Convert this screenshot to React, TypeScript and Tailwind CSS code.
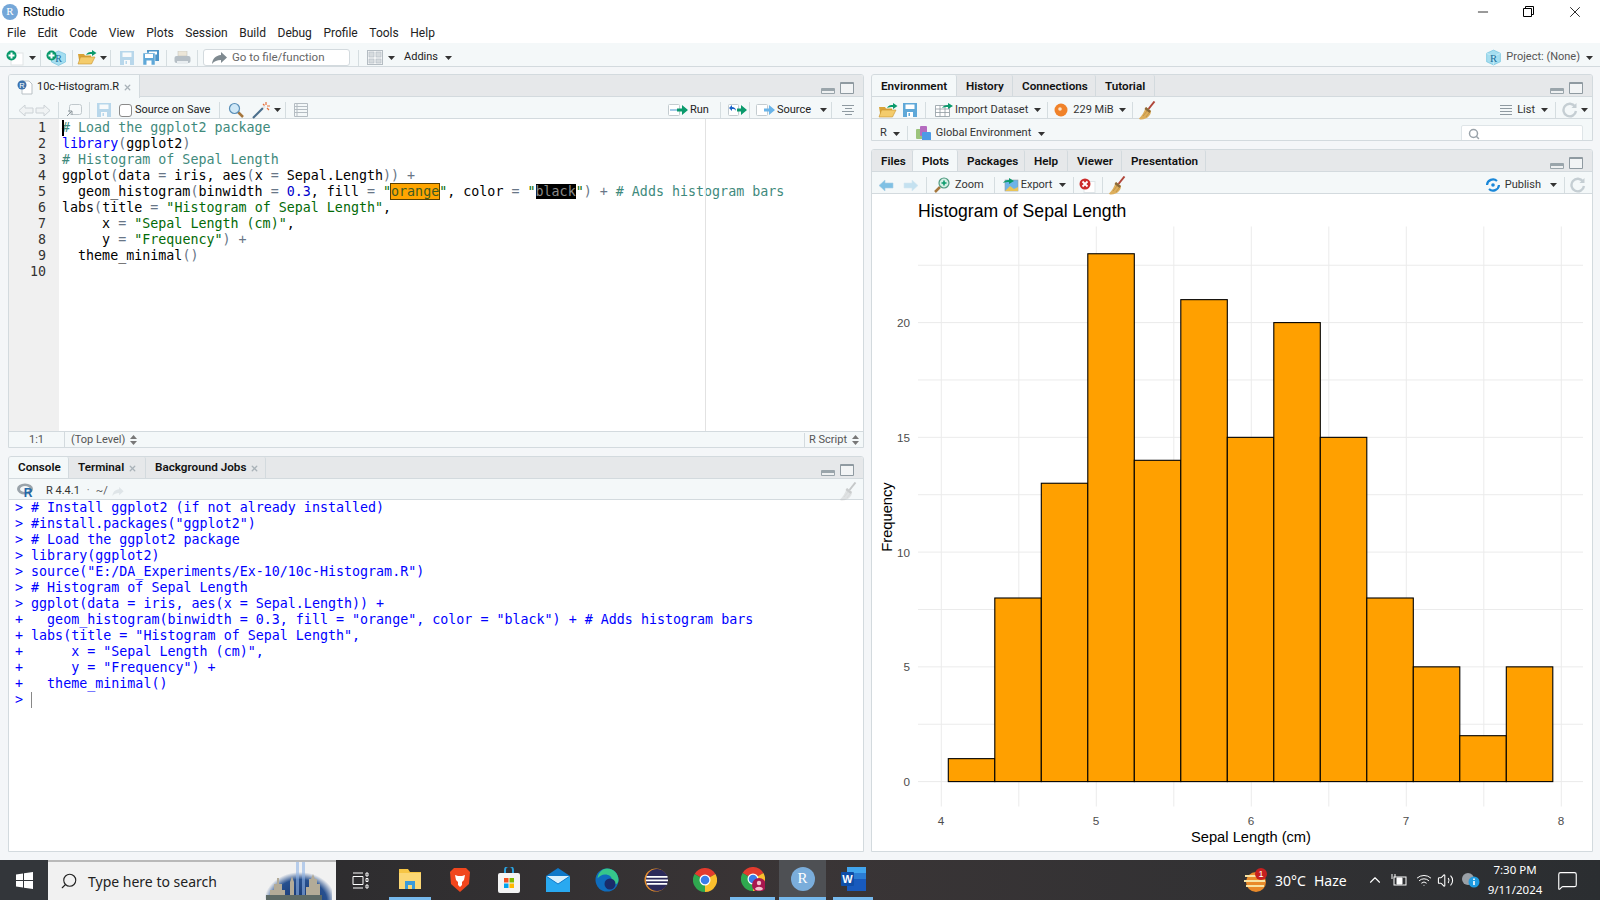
import React from 'react';
import { Search, X, Minus, ChevronUp, Volume2, Wifi, MessageSquare } from 'lucide-react';

const bars = [1, 8, 13, 23, 14, 21, 15, 20, 15, 8, 5, 2, 5];

const Sep = ({ className = 'mx-[7px]' }: { className?: string }) => (
  <div className={`w-px h-[16px] bg-[#d5dde0] shrink-0 ${className}`} />
);

const Caret = ({ className = '' }: { className?: string }) => (
  <svg width="7" height="4" viewBox="0 0 7 4" className={`shrink-0 ${className}`}>
    <path d="M0 0h7L3.5 4z" fill="#333" />
  </svg>
);

const UpDown = ({ className = '' }: { className?: string }) => (
  <svg width="7" height="10" viewBox="0 0 7 10" className={`shrink-0 ${className}`}>
    <path d="M0 4L3.500 0 7 4zM0 6h7l-3.500 4z" fill="#777" />
  </svg>
);

const GreenPlus = ({ x = 0, y = 0 }: { x?: number; y?: number }) => (
  <g transform={`translate(${x} ${y})`}>
    <circle cx="5.5" cy="5.5" r="5" fill="#0a9a6c" />
    <path d="M5.5 2.5v6M2.5 5.5h6" stroke="#fff" strokeWidth="2" />
  </g>
);

const NewDoc = () => (
  <svg width="18" height="16" viewBox="0 0 18 16" className="shrink-0">
    <rect x="5" y="3" width="12" height="12" fill="#fff" stroke="#e0e4e6" />
    <GreenPlus />
  </svg>
);

const Cube = ({ size = 16 }: { size?: number }) => (
  <svg width={size} height={size} viewBox="0 0 16 16" className="shrink-0">
    <path d="M8 1l6.5 3v8L8 15l-6.5-3V4z" fill="#a5def0" stroke="#6cc0dc" strokeWidth=".6" />
    <path d="M1.5 4L8 7l6.5-3M8 7v8" fill="none" stroke="#d6f1f9" strokeWidth=".6" />
    <text x="8" y="12" fontSize="10" textAnchor="middle" fill="#1b6f9c" fontFamily="Liberation Serif, serif">R</text>
  </svg>
);

const NewProject = () => (
  <svg width="20" height="16" viewBox="0 0 20 16" className="shrink-0">
    <g transform="translate(5 0)">
      <path d="M7.5 1l7 3v8l-7 3.500-7-3.500V4z" fill="#a5def0" stroke="#6cc0dc" strokeWidth=".6" />
      <text x="7.500" y="12" fontSize="10" textAnchor="middle" fill="#1b6f9c" fontFamily="Liberation Serif, serif">R</text>
    </g>
    <GreenPlus />
  </svg>
);

const OpenFolder = () => (
  <svg width="21" height="15" viewBox="0 0 21 15" className="shrink-0">
    <path d="M1 4h6l1 1.500h6V13H2.500z" fill="#d9a336" />
    <path d="M3.500 7H18l-3.500 7H1z" fill="#f4cc6c" stroke="#c8922c" strokeWidth=".6" />
    <path d="M9 5c1-2.500 3.500-3 6-3V0l4.500 3L15 6V4c-2 0-4 0-6 1z" fill="#0a9a6c" />
  </svg>
);

const Save = ({ faded = false }: { faded?: boolean }) => (
  <svg width="14" height="14" viewBox="0 0 14 14" className={`shrink-0 ${faded ? 'opacity-40' : ''}`}>
    <path d="M0 0h14v14H0z" fill="#5fa8d8" />
    <path d="M2.500 1.500h9v4.500h-9z" fill="#fff" />
    <path d="M4 9h6v5H4z" fill="#fff" />
    <path d="M5.500 10h1.500v3H5.500z" fill="#5fa8d8" />
  </svg>
);

const SaveAll = () => (
  <svg width="16" height="15" viewBox="0 0 16 15" className="shrink-0">
    <path d="M4 0h12v11H4z" fill="#4b94c8" />
    <path d="M6 1.500h8v3H6z" fill="#fff" />
    <path d="M0 3h12v12H0z" fill="#5fa8d8" stroke="#f4f8f9" strokeWidth=".5" />
    <path d="M2 4h8v4H2zM3.500 10.500h5V15h-5z" fill="#fff" />
  </svg>
);

const Printer = () => (
  <svg width="17" height="14" viewBox="0 0 17 14" className="shrink-0">
    <path d="M4 0h9v5H4z" fill="#ece6d8" stroke="#c8c8c0" strokeWidth=".6" />
    <rect x="0.500" y="5" width="16" height="7" rx="2" fill="#b6bfc6" />
    <path d="M3 10h11v3H3z" fill="#e8edf0" />
  </svg>
);

const Layout = () => (
  <svg width="16" height="15" viewBox="0 0 16 15" className="shrink-0">
    <rect x=".5" y=".5" width="15" height="14" fill="#f2f4f5" stroke="#b4bcc2" />
    <path d="M2 2h5v5H2zM9 2h5v5H9zM2 9h5v4H2zM9 9h5v4H9z" fill="#d6dbde" stroke="#b4bcc2" strokeWidth=".6" />
  </svg>
);

const Broom = ({ gray = false }: { gray?: boolean }) => (
  <svg width="18" height="19" viewBox="0 0 18 19" className={`shrink-0 ${gray ? 'opacity-30 grayscale' : ''}`}>
    <path d="M16.500 0.500L10.500 8" stroke="#b0463a" strokeWidth="2" />
    <path d="M8 6l5 4c0 4-3 8-10 8.500-1 0-2-.5-2-1C4 15 6 11 8 6z" fill="#dcae5c" />
    <path d="M8 6l5 4-1.500 2-5-4z" fill="#8a6a3a" />
    <path d="M5 15l4-5M8 16l3-4" stroke="#b98a3e" strokeWidth=".7" />
  </svg>
);

const PaneButtons = () => (
  <div className="ml-auto self-end flex items-end gap-[5px] mr-[9px] mb-[2px] shrink-0">
    <div className="w-[14px] h-[6px] rounded-[1px] border border-[#9aa5ab] border-t-[3px] bg-[#eef0f1]" />
    <div className="w-[14px] h-[12px] rounded-[1px] border border-[#8f9aa1] border-t-[2px] bg-[#f2f4f5]" />
  </div>
);

const Tab = ({ label, active, width, closable, low }: { label: string; active?: boolean; width: string; closable?: boolean; low?: boolean }) => (
  <div
    className={`${width} shrink-0 h-full flex items-center pl-[9px] ${low ? 'pt-[3px]' : 'pt-[1px]'} border-r border-[#d3dade] font-semibold text-[11.700px] text-[#111] rounded-t-[2px] ${
      active ? 'bg-[#f4f8f9] -mb-px h-[23px] z-10' : ''
    }`}
  >
    <span>{label}</span>
    {closable && <X size={9} strokeWidth={3.5} className="ml-[4px] text-[#a9b2b8]" />}
  </div>
);

const TabBar = ({ children }: { children: React.ReactNode }) => (
  <div className="flex items-start h-[22px] bg-[#e6e8ea] border-b border-[#d3dade] shrink-0">{children}</div>
);

const ToolRow = ({ children, className = 'h-[22px] pt-[5px]' }: { children: React.ReactNode; className?: string }) => (
  <div className={`flex items-center bg-[#f4f8f9] border-b border-[#d3dade] text-[11px] text-[#333] shrink-0 ${className}`}>{children}</div>
);

const LeftArrow = ({ opacity = 'opacity-100', flip = false }: { opacity?: string; flip?: boolean }) => (
  <svg width="16" height="13" viewBox="0 0 16 13" className={`shrink-0 ${opacity} ${flip ? '-scale-x-100' : ''}`}>
    <path d="M1 6.500L7 1v3h8v5H7v3z" fill="#7fc0e4" stroke="#a8cfe4" strokeWidth=".6" />
  </svg>
);

const GrayArrow = ({ flip = false }: { flip?: boolean }) => (
  <svg width="16" height="13" viewBox="0 0 16 13" className={`shrink-0 ${flip ? '-scale-x-100' : ''}`}>
    <path d="M1 6.500L7 1v3h8v5H7v3z" fill="#f0f3f4" stroke="#ccd2d6" />
  </svg>
);

const Refresh = () => (
  <svg width="16" height="16" viewBox="0 0 16 16" className="shrink-0">
    <path d="M13 4.500A6.300 6.300 0 1 0 14 9" fill="none" stroke="#c5ced3" strokeWidth="2.400" />
    <path d="M14.500 1v5h-5z" fill="#c5ced3" />
  </svg>
);

const EditorCode = () => {
  const cm = 'text-[#3f8a7c]';
  const op = 'text-[#687687]';
  const st = 'text-[#036a07]';
  return (
    <pre className="font-['DejaVu_Sans_Mono',monospace] text-[13.33px] leading-[16px] text-black pl-[3px] pt-[1px]">
      <div className={cm}># Load the ggplot2 package</div>
      <div><span className="text-[#0000ff]">library</span><span className={op}>(</span>ggplot2<span className={op}>)</span></div>
      <div className={cm}># Histogram of Sepal Length</div>
      <div>ggplot<span className={op}>(</span>data <span className={op}>=</span> iris, aes<span className={op}>(</span>x <span className={op}>=</span> Sepal.Length<span className={op}>)) +</span></div>
      <div>
        {'  geom_histogram'}<span className={op}>(</span>binwidth <span className={op}>=</span> <span className="text-[#0000cd]">0.3</span>, fill <span className={op}>=</span> <span className={st}>"</span>
        <span className="bg-[#ffa500] outline outline-1 outline-[#5a4000] text-[#3c5a20]">orange</span>
        <span className={st}>"</span>, color <span className={op}>=</span> <span className={st}>"</span>
        <span className="bg-black text-[#8a8a8a]">black</span>
        <span className={st}>"</span><span className={op}>) +</span> <span className={cm}># Adds histogram bars</span>
      </div>
      <div>labs<span className={op}>(</span>title <span className={op}>=</span> <span className={st}>"Histogram of Sepal Length"</span>,</div>
      <div>{'     x '}<span className={op}>=</span> <span className={st}>"Sepal Length (cm)"</span>,</div>
      <div>{'     y '}<span className={op}>=</span> <span className={st}>"Frequency"</span><span className={op}>) +</span></div>
      <div>{'  theme_minimal'}<span className={op}>()</span></div>
    </pre>
  );
};

const consoleLines = [
  '> # Install ggplot2 (if not already installed)',
  '> #install.packages("ggplot2")',
  '> # Load the ggplot2 package',
  '> library(ggplot2)',
  '> source("E:/DA_Experiments/Ex-10/10c-Histogram.R")',
  '> # Histogram of Sepal Length',
  '> ggplot(data = iris, aes(x = Sepal.Length)) +',
  '+   geom_histogram(binwidth = 0.3, fill = "orange", color = "black") + # Adds histogram bars',
  '+ labs(title = "Histogram of Sepal Length",',
  '+      x = "Sepal Length (cm)",',
  '+      y = "Frequency") +',
  '+   theme_minimal()',
  '> ',
];

const Chart = () => {
  const y0 = 781.6;
  const ux = 22.95;
  const x0 = 948.3;
  const bw = 46.5;
  const majorY = [0, 5, 10, 15, 20];
  const minorY = [2.5, 7.5, 12.5, 17.5, 22.5];
  const gridX = [4, 4.5, 5, 5.5, 6, 6.5, 7, 7.5, 8];
  return (
    <svg viewBox="872 194 720 657" className="w-full h-full block font-['Liberation_Sans',sans-serif]">
      {[...majorY, ...minorY].map((v) => (
        <line key={v} x1="918" x2="1583" y1={y0 - v * ux} y2={y0 - v * ux} stroke="#ebebeb" strokeWidth="1" />
      ))}
      {gridX.map((v) => (
        <line key={v} x1={941.3 + (v - 4) * 155} x2={941.3 + (v - 4) * 155} y1="226.5" y2="806.5" stroke="#ebebeb" strokeWidth="1" />
      ))}
      {bars.map((b, i) => (
        <rect key={i} x={x0 + i * bw} y={y0 - b * ux} width={bw} height={b * ux} fill="#ffa000" stroke="#000" strokeWidth="1.100" />
      ))}
      <text x="918" y="217" fontSize="17.600" fill="#000">Histogram of Sepal Length</text>
      {majorY.map((v) => (
        <text key={v} x="910" y={y0 + 4.500} fontSize="11.700" textAnchor="end" fill="#4d4d4d" transform={`translate(0 ${-v * ux})`}>{v}</text>
      ))}
      {[4, 5, 6, 7, 8].map((v) => (
        <text key={v} x={941 + (v - 4) * 155} y="825" fontSize="11.700" textAnchor="middle" fill="#4d4d4d">{v}</text>
      ))}
      <text x="1251" y="842" fontSize="14.700" textAnchor="middle" fill="#000">Sepal Length (cm)</text>
      <text transform="translate(892 517) rotate(-90)" fontSize="14.700" textAnchor="middle" fill="#000">Frequency</text>
    </svg>
  );
};

const Chrome = ({ profile = false }: { profile?: boolean }) => (
  <svg width="24" height="24" viewBox="0 0 24 24" className="shrink-0">
    <path d="M12 12L1.600 6A12 12 0 0 1 22.400 6z" fill="#e33b2e" />
    <path d="M12 12L22.400 6A12 12 0 0 1 12 24z" fill="#fbc02d" />
    <path d="M12 12L12 24A12 12 0 0 1 1.600 6z" fill="#2fa84f" />
    <circle cx="12" cy="12" r="5.500" fill="#fff" />
    <circle cx="12" cy="12" r="4.300" fill="#3b7dea" />
    {profile && (
      <>
        <circle cx="18" cy="18" r="7" fill="#a8164f" />
        <circle cx="18" cy="16" r="2.200" fill="#f4c2cf" />
        <path d="M14 22c1-3 7-3 8 0-2 2-6 2-8 0z" fill="#f4c2cf" />
      </>
    )}
  </svg>
);

const Taskbar = () => (
  <div className="h-[40px] flex items-center bg-gradient-to-r from-[#25272a] via-[#3a3536] to-[#2b2e31] shrink-0 font-['Noto_Sans',sans-serif]">
    <div className="w-[48px] h-full flex items-center justify-center bg-[#33363a]">
      <svg width="17" height="17" viewBox="0 0 17 17">
        <path d="M0 2.400l7-1v6.600H0zM8 1.300L17 0v8H8zM0 9h7v6.600l-7-1zM8 9h9v8l-9-1.300z" fill="#fff" />
      </svg>
    </div>
    <div className="w-[288px] h-full flex items-center bg-[#f1f1f1] border-t-2 border-[#b9b9b9] relative overflow-hidden">
      <Search size={18} strokeWidth={1.500} className="ml-[12px] text-[#222] -scale-x-100" />
      <span className="ml-[10px] text-[14px] text-[#222]">Type here to search</span>
      <svg width="76" height="40" viewBox="0 0 76 40" className="absolute right-[4px] top-[-2px]">
        <defs>
          <radialGradient id="skyline" cx="50%" cy="70%" r="50%">
            <stop offset="0%" stopColor="#16356e" />
            <stop offset="75%" stopColor="#27508f" />
            <stop offset="100%" stopColor="#f1f1f1" />
          </radialGradient>
        </defs>
        <ellipse cx="44" cy="30" rx="36" ry="30" fill="url(#skyline)" />
        <path d="M40 0h3v40h-3zM46 0h3v40h-3z" fill="#8fb4e6" opacity=".6" />
        <path d="M14 40V30h4v-6h3v-6h2v6h3v6h3v10zM34 40V22l2-6 2 6v18zM50 40V27h3v-8h2l2-5 2 5h2v5h3v16z" fill="#b3ab98" />
        <path d="M10 40V35h56v5z" fill="#5d6a66" />
      </svg>
    </div>
    <div className="w-[48px] flex justify-center">
      <svg width="17" height="17" viewBox="0 0 17 17" fill="none" stroke="#fff">
        <path d="M1 1h10M1 16h10M1 4.500h10v8H1zM14 1h2v3h-2zM14 6.500h2v3h-2zM14 13h2v3h-2z" />
      </svg>
    </div>
    <div className="w-[42px] ml-[5px] mr-[4px] h-full flex items-center justify-center border-b-[3px] border-[#76b9ed] relative">
      <svg width="24" height="22" viewBox="0 0 24 22">
        <path d="M1 1h9l2 3h11v17H1z" fill="#f6c544" />
        <path d="M1 5h22v16H1z" fill="#fbd774" />
        <path d="M7 13h10v8h-3v-4h-4v4H7z" fill="#3a9ad9" />
      </svg>
    </div>
    <div className="w-[49px] flex justify-center">
      <svg width="22" height="26" viewBox="0 0 22 26">
        <path d="M5 1h12l4 4-1 12-9 8-9-8L1 5z" fill="#f1461d" />
        <path d="M6 8l3 1h4l3-1-1 5-2 2v3l-2 2-2-2v-3l-2-2z" fill="#fff" />
      </svg>
    </div>
    <div className="w-[49px] flex justify-center">
      <svg width="24" height="26" viewBox="0 0 24 26">
        <path d="M8 8V3a4 4 0 0 1 8 0v5" fill="none" stroke="#2aa0dc" strokeWidth="2" />
        <rect x="1" y="6" width="22" height="20" rx="2" fill="#f4f4f4" />
        <path d="M7 11h4.500v4.500H7z" fill="#f25022" />
        <path d="M12.500 11H17v4.500h-4.500z" fill="#7fba00" />
        <path d="M7 16.500h4.500V21H7z" fill="#00a4ef" />
        <path d="M12.500 16.500H17V21h-4.500z" fill="#ffb900" />
      </svg>
    </div>
    <div className="w-[49px] flex justify-center">
      <svg width="24" height="24" viewBox="0 0 24 24">
        <path d="M12 0l12 8v16H0V8z" fill="#0f78c8" />
        <path d="M0 8h24v16H0z" fill="#29a9f0" />
        <path d="M0 8l12 8 12-8" fill="#d9f0fc" />
        <path d="M0 8l12 8 12-8" fill="none" stroke="#0f78c8" strokeWidth="1" />
      </svg>
    </div>
    <div className="w-[49px] flex justify-center">
      <svg width="24" height="26" viewBox="0 0 24 26">
        <circle cx="12" cy="13" r="11.500" fill="#0f6cbd" />
        <path d="M12 1.500C19 1.500 23.500 7 23.500 13c0 3-2 4.500-5 4.500H12c3 0 5-2 5-4 0-4-3-6-7-6-3 0-6 2-7.500 4C3 6 7 1.500 12 1.500z" fill="#36c78b" />
        <circle cx="15" cy="17" r="5.500" fill="#1a2c6a" />
      </svg>
    </div>
    <div className="w-[49px] flex justify-center">
      <svg width="24" height="26" viewBox="0 0 24 26">
        <circle cx="12" cy="13" r="11.500" fill="#e8902c" />
        <circle cx="13" cy="13" r="11" fill="#2c2a5a" />
        <path d="M2.500 9h21v1.800h-21zM2 12.500h22v1.800H2zM2.800 16h20.400v1.800H2.800z" fill="#fff" />
      </svg>
    </div>
    <div className="w-[49px] flex justify-center"><Chrome /></div>
    <div className="w-[45px] ml-[1px] mr-[3px] h-full flex items-center justify-center border-b-[3px] border-[#76b9ed]"><Chrome profile /></div>
    <div className="w-[47px] ml-[1px] h-full flex items-center justify-center bg-[#4e5054] border-b-[3px] border-[#76b9ed]">
      <div className="w-[24px] h-[24px] rounded-full bg-[#7aaddb] flex items-center justify-center text-white text-[15px] font-['Liberation_Serif',serif]">R</div>
    </div>
    <div className="w-[40px] ml-[7px] h-full flex items-center justify-center border-b-[3px] border-[#76b9ed]">
      <svg width="25" height="24" viewBox="0 0 25 24">
        <path d="M6 0h19v24H6z" fill="#185abd" />
        <path d="M6 0h19v6H6z" fill="#41a5ee" />
        <path d="M6 6h19v6H6z" fill="#2b7cd3" />
        <rect x="0" y="5" width="13" height="14" rx="1" fill="#0f4ea8" />
        <text x="6.500" y="16" fontSize="11" fontWeight="700" textAnchor="middle" fill="#fff" fontFamily="Liberation Sans, sans-serif">W</text>
      </svg>
    </div>
    <div className="ml-auto flex items-center h-full text-white">
      <svg width="26" height="26" viewBox="0 0 26 26" className="mr-[6px]">
        <circle cx="13" cy="15" r="10" fill="#e98a2a" />
        <path d="M2 9h16M1 14h21M3 19h18" stroke="#f7e3a3" strokeWidth="2" />
        <circle cx="18" cy="7" r="6" fill="#c62020" />
        <text x="18" y="10" fontSize="9" textAnchor="middle" fill="#fff" fontFamily="Liberation Sans, sans-serif">1</text>
      </svg>
      <span className="text-[14px] w-[39px]">30°C</span>
      <span className="text-[14px] w-[52px]">Haze</span>
      <ChevronUp size={18} strokeWidth={1.500} className="mr-[7px]" />
      <svg width="16" height="13" viewBox="0 0 16 13" fill="none" stroke="#fff" className="mr-[9px]">
        <rect x="3" y="3" width="12" height="8" />
        <path d="M6 4h5v6H6z" fill="#fff" />
        <path d="M1 0v5M4 0v3" />
      </svg>
      <Wifi size={16} strokeWidth={1.500} className="mr-[5px]" />
      <Volume2 size={17} strokeWidth={1.500} className="mr-[8px]" />
      <svg width="18" height="16" viewBox="0 0 18 16" className="mr-[6px]">
        <circle cx="6" cy="7" r="6" fill="#9aa0a6" />
        <circle cx="12" cy="10" r="5.500" fill="#1f9be0" />
        <path d="M11.200 9h1.600v4h-1.600zM11.200 6.500h1.600V8h-1.600z" fill="#fff" />
      </svg>
      <div className="w-[58px] text-center text-[11.500px] leading-[20px]">
        <div>7:30 PM</div>
        <div>9/11/2024</div>
      </div>
      <MessageSquare size={21} strokeWidth={1.300} className="ml-[13px] mr-[22px]" />
    </div>
  </div>
);

export default function App() {
  return (
    <div className="w-[1600px] h-[900px] flex flex-col overflow-hidden bg-white font-['Roboto',sans-serif] text-[12px] text-[#333]">
      {/* window title */}
      <div className="h-[22px] pt-[1px] flex items-center bg-white shrink-0">
        <div className="ml-[2px] w-[16px] h-[16px] rounded-full bg-[#75a7d8] text-white text-[11px] flex items-center justify-center font-['Liberation_Serif',serif]">R</div>
        <span className="ml-[5px] text-[12px] text-black">RStudio</span>
        <Minus size={16} strokeWidth={1.200} className="ml-auto mr-[32px] text-black" />
        <svg width="11" height="11" viewBox="0 0 11 11" fill="none" stroke="#000" className="mr-[32px]">
          <path d="M.5 2.500h8v8h-8zM2.500 2.500v-2h8v8h-2" />
        </svg>
        <X size={18} strokeWidth={1.100} className="mr-[16px] text-black" />
      </div>

      {/* menu */}
      <div className="h-[21px] pt-[1px] flex items-center gap-[11.600px] pl-[7px] bg-white shrink-0 text-[12px] text-[#222]">
        {['File', 'Edit', 'Code', 'View', 'Plots', 'Session', 'Build', 'Debug', 'Profile', 'Tools', 'Help'].map((m) => (
          <span key={m}>{m}</span>
        ))}
      </div>

      {/* main toolbar */}
      <div className="h-[24px] pt-[6px] flex items-center bg-[#f4f8f9] border-b border-[#d3dade] shrink-0 pl-[6px] text-[11px] text-[#333]">
        <NewDoc />
        <Caret className="ml-[5px]" />
        <Sep className="ml-[4px] mr-[5px]" />
        <NewProject />
        <Sep className="ml-[6px] mr-[4px]" />
        <OpenFolder />
        <Caret className="ml-[2px]" />
        <Sep className="ml-[3px] mr-[9px]" />
        <Save faded />
        <div className="w-[9px]" />
        <SaveAll />
        <Sep className="ml-[7px] mr-[7px]" />
        <Printer />
        <Sep className="ml-[6px] mr-[5px]" />
        <div className="w-[147px] h-[17px] bg-white border border-[#d3dade] rounded-[3px] flex items-center pl-[8px] text-[#666]">
          <svg width="15" height="12" viewBox="0 0 15 12" className="shrink-0">
            <path d="M9 0l6 5.500L9 11V8C5 8 2.500 9 0 12 .5 7 3.500 3.500 9 3z" fill="#7f8a90" />
          </svg>
          <span className="ml-[5px] text-[11.500px]">Go to file/function</span>
        </div>
        <Sep className="ml-[8px] mr-[8px]" />
        <Layout />
        <Caret className="ml-[5px]" />
        <span className="ml-[9px] text-[#222]">Addins</span>
        <Caret className="ml-[7px]" />
        <div className="ml-auto flex items-center mr-[7px]">
          <Cube size={17} />
          <span className="ml-[4px] text-[#555]">Project: (None)</span>
          <Caret className="ml-[6px]" />
        </div>
      </div>

      {/* panes */}
      <div className="flex-1 min-h-0 flex gap-[7px] pt-[7px] pb-[8px] pl-[8px] pr-[7px] bg-[#f4f6f8]">
        <div className="w-[856px] shrink-0 flex flex-col gap-[8px]">
          {/* source */}
          <div className="h-[374px] shrink-0 flex flex-col border border-[#d3dade] rounded-t-[3px] bg-white overflow-hidden">
            <TabBar>
              <div className="w-[131px] h-[23px] -mb-px z-10 bg-[#f4f8f9] border-r border-[#d3dade] flex items-center pl-[8px] pt-[1px] text-[11px] text-[#222]">
                <svg width="16" height="15" viewBox="0 0 16 15" className="shrink-0">
                  <path d="M5 1h7l3 3v10H5z" fill="#fff" stroke="#b8c0c5" />
                  <circle cx="5" cy="5" r="4.500" fill="#3d72ac" />
                  <text x="5" y="8" fontSize="7.500" fill="#fff" textAnchor="middle" fontFamily="Liberation Sans, sans-serif">R</text>
                </svg>
                <span className="ml-[4px]">10c-Histogram.R</span>
                <X size={9} strokeWidth={3.500} className="ml-[4px] text-[#a9b2b8]" />
              </div>
              <PaneButtons />
            </TabBar>
            <ToolRow>
              <div className="ml-[9px]"><GrayArrow /></div>
              <div className="ml-[1px]"><GrayArrow flip /></div>
              <Sep className="ml-[7px] mr-[7px]" />
              <svg width="16" height="13" viewBox="0 0 16 13" className="shrink-0">
                <rect x="3.500" y=".5" width="12" height="10" rx="2" fill="#f6f9fa" stroke="#c0c8cc" />
                <path d="M1 12l5-5M2 7h4v4" fill="none" stroke="#8d979d" />
              </svg>
              <Sep className="ml-[7px] mr-[7px]" />
              <Save faded />
              <input type="checkbox" readOnly className="appearance-none ml-[8px] w-[13px] h-[13px] bg-white border border-[#8a8a8a] rounded-[3px]" />
              <span className="ml-[3px] text-[#222] whitespace-nowrap">Source on Save</span>
              <Sep className="ml-[9px] mr-[8px]" />
              <svg width="16" height="16" viewBox="0 0 16 16" className="shrink-0">
                <path d="M10 10l5 5" stroke="#a5763c" strokeWidth="2.500" />
                <circle cx="6.500" cy="6.500" r="5" fill="#cfe8f7" stroke="#5a8fb8" strokeWidth="1.200" />
              </svg>
              <svg width="20" height="17" viewBox="0 0 20 17" className="shrink-0 ml-[8px]">
                <path d="M1 16L11 6" stroke="#4c6f8c" strokeWidth="2.200" />
                <path d="M11 6l2-2" stroke="#e6e6e6" strokeWidth="2.200" />
                <path d="M14 0v3M18 4h-3M11 2l1.500 1.500M17 8l-2-2" stroke="#e8703a" strokeWidth="1.200" />
              </svg>
              <Caret className="ml-[2px]" />
              <Sep className="ml-[4px] mr-[8px]" />
              <svg width="14" height="14" viewBox="0 0 14 14" fill="none" stroke="#b4bcc2" className="shrink-0">
                <path d="M.5.5h13v13H.5zM.5 3.500h13M.5 6.500h13M.5 9.500h13M3 .5v13" />
              </svg>
              <div className="ml-auto flex items-center">
                <svg width="20" height="12" viewBox="0 0 20 12" className="shrink-0">
                  <rect x=".5" y=".5" width="11" height="11" rx="1" fill="#fff" stroke="#c4ccd0" />
                  <path d="M2 6h7" stroke="#a5cbe8" strokeWidth="2" />
                  <path d="M9 4.500h5V1l6 5-6 5V7.500H9z" fill="#0a9a6c" />
                </svg>
                <span className="ml-[2px] text-[#222]">Run</span>
                <Sep className="ml-[11px] mr-[7px]" />
                <svg width="19" height="12" viewBox="0 0 19 12" className="shrink-0">
                  <rect x=".5" y=".5" width="10" height="11" rx="1" fill="#fff" stroke="#c4ccd0" />
                  <path d="M1 4l3-3v2c2 0 4 1 4 4-1-2-2-2-4-2v2z" fill="#1a62c8" />
                  <path d="M9 4.500h4V1l6 5-6 5V7.500H9z" fill="#0a9a6c" />
                </svg>
                <Sep className="ml-[2px] mr-[6px]" />
                <svg width="20" height="12" viewBox="0 0 20 12" className="shrink-0">
                  <rect x=".5" y=".5" width="11" height="11" rx="1" fill="#fff" stroke="#c4ccd0" />
                  <path d="M8 4.500h5V1l6 5-6 5V7.500H8z" fill="#6ab4e8" />
                </svg>
                <span className="ml-[1px] text-[#222]">Source</span>
                <Caret className="ml-[9px]" />
                <Sep className="ml-[4px] mr-[10px]" />
                <svg width="12" height="11" viewBox="0 0 12 11" stroke="#8f9aa1" className="shrink-0 mr-[9px]">
                  <path d="M0 .5h12M3 3.500h7M0 6.500h12M3 9.500h7" />
                </svg>
              </div>
            </ToolRow>
            <div className="flex-1 min-h-0 flex relative">
              <div className="w-[50px] shrink-0 bg-[#f0f0f0] text-right pr-[13px] pt-[1px] font-['DejaVu_Sans_Mono',monospace] text-[13.330px] leading-[16px] text-[#333]">
                {[1, 2, 3, 4, 5, 6, 7, 8, 9, 10].map((n) => (
                  <div key={n}>{n}</div>
                ))}
              </div>
              <EditorCode />
              <div className="absolute left-[53px] top-[1px] w-[2px] h-[16px] bg-black" />
              <div className="absolute left-[696px] top-0 bottom-0 w-px bg-[#e2e2e2]" />
            </div>
            <div className="h-[16px] shrink-0 pt-[1px] flex items-center bg-[#f4f8f9] border-t border-[#d3dade] text-[#555] text-[11px]">
              <span className="w-[56px] text-center border-r border-[#d3dade]">1:1</span>
              <span className="ml-[6px]">(Top Level)</span>
              <UpDown className="ml-[5px]" />
              <div className="ml-auto w-px h-full bg-[#d3dade]" />
              <span className="ml-[4px]">R Script</span>
              <UpDown className="ml-[5px] mr-[4px]" />
            </div>
          </div>

          {/* console */}
          <div className="flex-1 min-h-0 flex flex-col border border-[#d3dade] rounded-t-[3px] bg-white overflow-hidden">
            <TabBar>
              <Tab label="Console" active width="w-[60px]" />
              <Tab label="Terminal" width="w-[77px]" closable />
              <Tab label="Background Jobs" width="w-[120px]" closable />
              <PaneButtons />
            </TabBar>
            <ToolRow className="h-[21px] pt-[4px]">
              <svg width="18" height="16" viewBox="0 0 18 16" className="ml-[8px] shrink-0">
                <ellipse cx="8" cy="6" rx="8" ry="5.500" fill="#9aa3aa" />
                <ellipse cx="8" cy="6" rx="5" ry="3" fill="#f4f8f9" />
                <text x="11" y="14" fontSize="12" fontWeight="700" fill="#2267a8" textAnchor="middle" fontFamily="Liberation Sans, sans-serif">R</text>
              </svg>
              <span className="ml-[11px] text-[#333]">R 4.4.1</span>
              <span className="ml-[7px] text-[#777]">·</span>
              <span className="ml-[6px] text-[#555]">~/</span>
              <svg width="12" height="9" viewBox="0 0 15 12" className="ml-[4px] shrink-0">
                <path d="M9 0l6 5.500L9 11V8C5 8 2.500 9 0 12 .5 7 3.500 3.500 9 3z" fill="#dfe5e8" />
              </svg>
              <div className="ml-auto mr-[6px]"><Broom gray /></div>
            </ToolRow>
            <div className="flex-1 min-h-0 relative pl-[6px]">
              <pre className="font-['DejaVu_Sans_Mono',monospace] text-[13.330px] leading-[16px] text-[#0000ff]">
                {consoleLines.map((l, i) => (
                  <div key={i}>{l}</div>
                ))}
              </pre>
              <div className="absolute left-[22px] top-[192px] w-px h-[16px] bg-[#888]" />
            </div>
          </div>
        </div>

        <div className="flex-1 min-w-0 flex flex-col gap-[8px]">
          {/* environment */}
          <div className="h-[67px] shrink-0 flex flex-col border border-[#d3dade] rounded-t-[3px] bg-[#f4f8f9] overflow-hidden">
            <TabBar>
              <Tab label="Environment" low active width="w-[85px]" />
              <Tab label="History" low width="w-[56px]" />
              <Tab label="Connections" low width="w-[83px]" />
              <Tab label="Tutorial" low width="w-[59px]" />
              <PaneButtons />
            </TabBar>
            <ToolRow>
              <div className="ml-[6px]"><OpenFolder /></div>
              <div className="ml-[4px]"><Save /></div>
              <Sep className="ml-[8px] mr-[9px]" />
              <svg width="18" height="14" viewBox="0 0 18 14" className="shrink-0">
                <path d="M.5 2.500h14v11H.5zM.5 6h14M.5 9.500h14M5 2.500v11M10 2.500v11" fill="#fff" stroke="#8f9aa1" strokeWidth=".8" />
                <path d="M7 5c1-2 3-3 6-3V0l5 3-5 3V4c-2 0-4 0-6 1z" fill="#0a9a6c" />
              </svg>
              <span className="ml-[2px]">Import Dataset</span>
              <Caret className="ml-[6px]" />
              <Sep className="ml-[6px] mr-[6px]" />
              <svg width="14" height="14" viewBox="0 0 14 14" className="shrink-0">
                <circle cx="7" cy="7" r="6.500" fill="#f0822a" />
                <circle cx="6" cy="6" r="1.800" fill="#fbe3c8" />
              </svg>
              <span className="ml-[5px]">229 MiB</span>
              <Caret className="ml-[5px]" />
              <Sep className="ml-[6px] mr-[5px]" />
              <Broom />
              <div className="ml-auto flex items-center">
                <svg width="12" height="11" viewBox="0 0 12 11" stroke="#8f9aa1" className="shrink-0">
                  <path d="M0 .5h12M0 3.500h12M0 6.500h12M0 9.500h12" />
                </svg>
                <span className="ml-[5px]">List</span>
                <Caret className="ml-[6px]" />
                <Sep className="ml-[7px] mr-[6px]" />
                <Refresh />
                <Caret className="ml-[3px] mr-[4px]" />
              </div>
            </ToolRow>
            <div className="flex-1 flex items-center pt-[6px] text-[11px] text-[#333]">
              <span className="ml-[8px]">R</span>
              <Caret className="ml-[6px]" />
              <Sep className="ml-[7px] mr-[8px]" />
              <svg width="15" height="15" viewBox="0 0 15 15" className="shrink-0">
                <rect x="0" y="3" width="8" height="10" rx="1" fill="#9cc47c" />
                <rect x="4" y="0" width="7" height="10" rx="1" fill="#b56cc0" />
                <rect x="6" y="6" width="9" height="9" rx="1" fill="#4d9be6" />
              </svg>
              <span className="ml-[5px]">Global Environment</span>
              <Caret className="ml-[7px]" />
              <div className="ml-auto self-end mr-[9px] w-[122px] h-[17px] bg-white border border-[#dfe5e8] rounded-[2px] flex items-center pl-[6px]">
                <Search size={12} strokeWidth={3} className="text-[#9aa3aa]" />
              </div>
            </div>
          </div>

          {/* plots */}
          <div className="flex-1 min-h-0 flex flex-col border border-[#d3dade] rounded-t-[3px] bg-white overflow-hidden">
            <TabBar>
              <Tab label="Files" low width="w-[41px]" />
              <Tab label="Plots" low active width="w-[45px]" />
              <Tab label="Packages" low width="w-[67px]" />
              <Tab label="Help" low width="w-[43px]" />
              <Tab label="Viewer" low width="w-[54px]" />
              <Tab label="Presentation" low width="w-[84px]" />
              <PaneButtons />
            </TabBar>
            <ToolRow>
              <div className="ml-[6px]"><LeftArrow /></div>
              <div className="ml-[9px]"><LeftArrow flip opacity="opacity-40" /></div>
              <Sep className="ml-[7px] mr-[7px]" />
              <svg width="16" height="16" viewBox="0 0 16 16" className="shrink-0">
                <path d="M6 10l-5 5" stroke="#a5763c" strokeWidth="2.500" />
                <circle cx="10" cy="6" r="5" fill="#d3f0e4" stroke="#4f9a80" strokeWidth="1.200" />
                <path d="M10 3.500v5M7.500 6h5" stroke="#0a9a6c" strokeWidth="1.600" />
              </svg>
              <span className="ml-[5px]">Zoom</span>
              <Sep className="ml-[10px] mr-[8px]" />
              <svg width="16" height="14" viewBox="0 0 16 14" className="shrink-0">
                <rect x="2" y="2" width="13" height="11" fill="#6db3e8" stroke="#8f9aa1" strokeWidth=".6" />
                <path d="M2 13l5-5 4 3 4-2v4z" fill="#e8c45a" />
                <path d="M0 5c1-2 3-3 6-3V0l5 3-5 3V4C4 4 2 4 0 5z" fill="#0a9a6c" />
              </svg>
              <span className="ml-[2px]">Export</span>
              <Caret className="ml-[7px]" />
              <Sep className="ml-[7px] mr-[5px]" />
              <svg width="17" height="15" viewBox="0 0 17 15" className="shrink-0">
                <rect x="5" y="3.500" width="11" height="11" fill="#fff" stroke="#dfe5e8" />
                <circle cx="6" cy="6" r="5.500" fill="#cc2b2b" />
                <path d="M3.500 3.500l5 5M8.500 3.500l-5 5" stroke="#fff" strokeWidth="1.800" />
              </svg>
              <Sep className="ml-[6px] mr-[5px]" />
              <Broom />
              <div className="ml-auto flex items-center">
                <svg width="16" height="14" viewBox="0 0 16 14" fill="none" stroke="#1a87d8" strokeWidth="2.200" className="shrink-0">
                  <path d="M2 7a6 6 0 0 1 10-4M14 7a6 6 0 0 1-10 4" />
                  <circle cx="8" cy="7" r="1.800" fill="#1a87d8" stroke="none" />
                </svg>
                <span className="ml-[4px]">Publish</span>
                <Caret className="ml-[9px]" />
                <Sep className="ml-[7px] mr-[5px]" />
                <div className="mr-[6px]"><Refresh /></div>
              </div>
            </ToolRow>
            <div className="flex-1 min-h-0">
              <Chart />
            </div>
          </div>
        </div>
      </div>

      <Taskbar />
    </div>
  );
}
